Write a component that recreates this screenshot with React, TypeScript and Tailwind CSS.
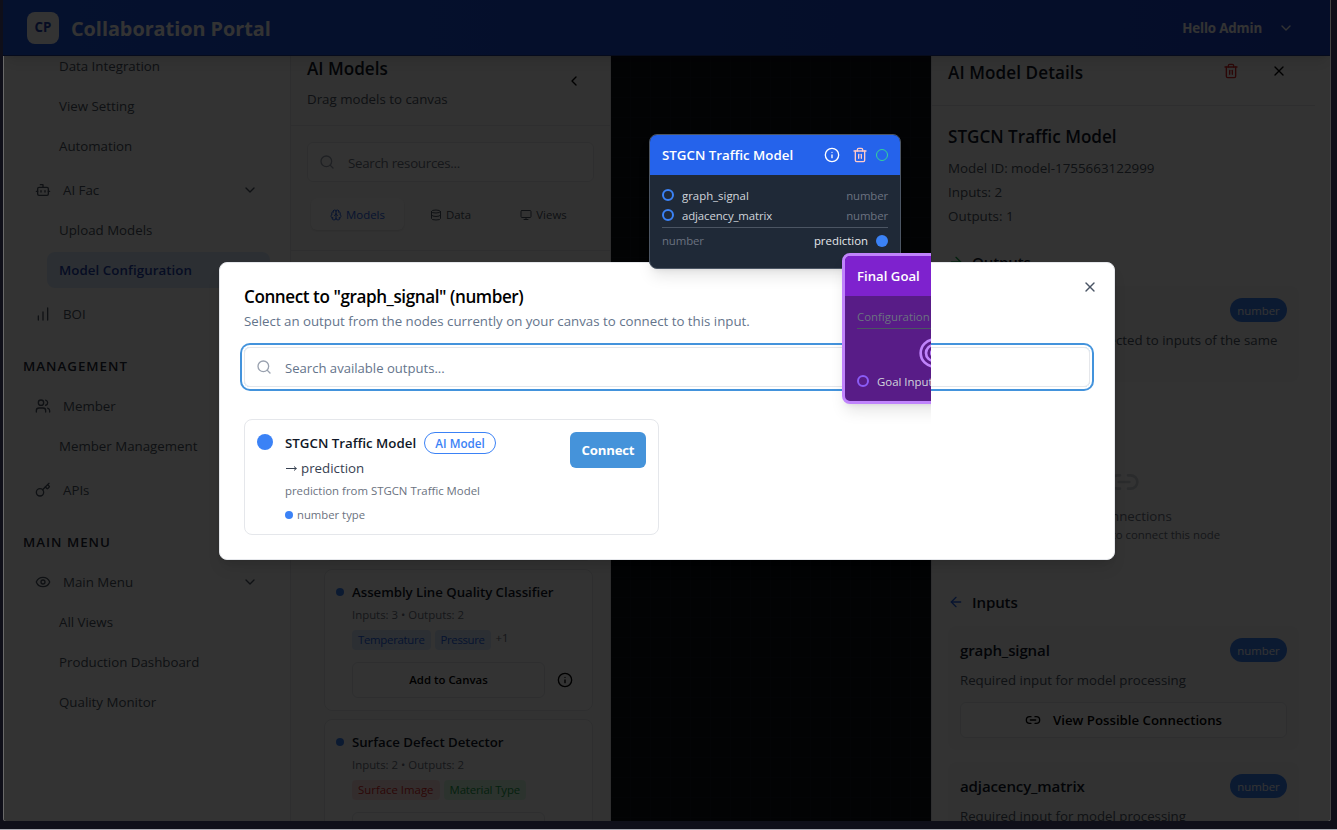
import type { ReactNode } from "react";
import {
  ArrowLeft,
  ArrowRight,
  BarChart,
  Bot,
  Brain,
  ChevronDown,
  ChevronLeft,
  Database,
  Eye,
  Info,
  Key,
  Link2,
  Monitor,
  Search,
  Target,
  Trash2,
  Users,
  X,
} from "lucide-react";

function Header() {
  return (
    <header className="relative z-10 flex h-14 shrink-0 items-center justify-between border-b border-[#1e3a8a] bg-gradient-to-r from-[#1c55e2] to-[#1d42c8] pr-[37px] pl-6 shadow-lg">
      <div className="flex items-center gap-3">
        <div className="flex size-8 items-center justify-center rounded-lg bg-white text-[13.3px] font-bold text-[#1e40af]">
          <span className="pt-px">CP</span>
        </div>
        <span className="pt-0.5 text-[19.8px] leading-7 font-bold text-white">Collaboration Portal</span>
      </div>
      <div className="flex items-center gap-4">
        <span className="pt-px text-[13.3px] leading-5 font-bold tracking-[-0.01em] text-white">Hello Admin</span>
        <ChevronDown className="size-4 text-white" />
      </div>
    </header>
  );
}

function SideParent({ icon, label, open }: { icon: ReactNode; label: string; open?: boolean }) {
  return (
    <div className="mt-2 flex h-9 shrink-0 items-center gap-3 px-3 text-[#4b5563]">
      {icon}
      <span className="flex-1">{label}</span>
      {open && <ChevronDown className="size-4" />}
    </div>
  );
}

function SideChild({ label, active }: { label: string; active?: boolean }) {
  return (
    <div
      className={
        active
          ? "mt-1 ml-6 flex h-9 shrink-0 items-center rounded-lg bg-[#dbeafe] px-3 font-semibold tracking-[0.005em] text-[#1e40af]"
          : "mt-1 ml-6 flex h-9 shrink-0 items-center px-3 text-[#4b5563]"
      }
    >
      {label}
    </div>
  );
}

function SideHeading({ label }: { label: string }) {
  return (
    <div className="mt-4 -mb-1 flex h-9 shrink-0 items-center font-semibold tracking-[0.075em] text-[#1f2937]">
      {label}
    </div>
  );
}

function Sidebar() {
  return (
    <aside className="flex w-[287px] shrink-0 flex-col overflow-hidden border-r border-gray-200 bg-white pr-5 pl-[19px] text-[13.3px] leading-5">
      <div className="-mt-3 flex flex-col">
        <SideChild label="Data Integration" />
        <SideChild label="View Setting" />
        <SideChild label="Automation" />
        <SideParent icon={<Bot className="size-4" />} label="AI Fac" open />
        <SideChild label="Upload Models" />
        <SideChild label="Model Configuration" active />
        <SideParent icon={<BarChart className="size-4" />} label="BOI" />
        <SideHeading label="MANAGEMENT" />
        <SideParent icon={<Users className="size-4" />} label="Member" />
        <SideChild label="Member Management" />
        <SideParent icon={<Key className="size-4" />} label="APIs" />
        <SideHeading label="MAIN MENU" />
        <SideParent icon={<Eye className="size-4" />} label="Main Menu" open />
        <SideChild label="All Views" />
        <SideChild label="Production Dashboard" />
        <SideChild label="Quality Monitor" />
      </div>
    </aside>
  );
}

function ModelCard({ name, meta, children }: { name: string; meta: string; children: ReactNode }) {
  return (
    <div className="flex h-[142px] shrink-0 gap-2 rounded-lg border border-gray-200 bg-white p-[11px]">
      <span className="mt-[7px] size-2 shrink-0 rounded-full bg-[#3b82f6]" />
      <div className="flex flex-1 flex-col">
        <div className="text-[13.25px] leading-[22px] font-semibold tracking-[-0.003em] text-gray-900">{name}</div>
        <div className="mt-1 text-[11.4px] leading-4 text-[#6b7280]">{meta}</div>
        <div className="mt-[7px] flex gap-1 text-[11.4px] leading-5">{children}</div>
        <div className="mt-3 flex items-center gap-1">
          <div className="flex h-9 flex-1 items-center justify-center rounded-md border border-gray-200 text-[11.4px] font-semibold text-black">
            Add to Canvas
          </div>
          <div className="flex w-8 justify-center text-black">
            <Info className="size-4" />
          </div>
        </div>
      </div>
    </div>
  );
}

function ModelsPanel() {
  return (
    <section className="flex w-80 shrink-0 flex-col overflow-hidden border-r border-gray-200 bg-[#fafafa]">
      <div className="flex h-[70px] shrink-0 items-start justify-between border-b border-gray-200 pr-7 pl-4">
        <div>
          <h2 className="-mt-px text-[17.1px] leading-7 font-semibold text-gray-900">AI Models</h2>
          <p className="mt-1.5 text-[13.3px] leading-5 text-[#4b5563]">Drag models to canvas</p>
        </div>
        <ChevronLeft className="mt-[17px] size-4 text-black" />
      </div>
      <div className="flex h-[125px] shrink-0 flex-col border-b border-gray-200 pt-4 pr-4 pl-4">
        <div className="flex h-10 items-center gap-3 rounded-md border border-gray-200 bg-white px-3">
          <Search className="-ml-px size-4 text-gray-400" />
          <span className="ml-px pt-0.5 text-[13.3px] leading-5 tracking-[-0.02em] text-[#6b7280]">Search resources...</span>
        </div>
        <div className="mt-3 grid grid-cols-3 p-1 text-[11.4px] text-[#4b5563]">
          <div className="flex h-8 items-center justify-center gap-1 rounded-md bg-white pt-px text-[#2563eb] shadow-sm">
            <Brain className="size-3" />
            Models
          </div>
          <div className="flex h-8 items-center justify-center gap-1 pt-px">
            <Database className="size-3" />
            Data
          </div>
          <div className="flex h-8 items-center justify-center gap-1 pt-px">
            <Monitor className="size-3" />
            Views
          </div>
        </div>
      </div>
      <div className="flex flex-1 flex-col justify-start gap-2 overflow-hidden pt-[18px] pr-[17px] pl-[33px]">
        <div className="flex h-[292px] shrink-0 flex-col gap-2">
          <div className="h-[142px] rounded-lg border border-gray-200 bg-white" />
          <div className="h-[142px] rounded-lg border border-gray-200 bg-white" />
        </div>
        <ModelCard name="Assembly Line Quality Classifier" meta="Inputs: 3 • Outputs: 2">
          <span className="rounded bg-[#dbeafe] px-1.5 tracking-[-0.025em] text-[#2563eb]">Temperature</span>
          <span className="rounded bg-[#dbeafe] px-1.5 tracking-[-0.03em] text-[#2563eb]">Pressure</span>
          <span className="-mt-px ml-px leading-[18px] text-[#6b7280]">+1</span>
        </ModelCard>
        <ModelCard name="Surface Defect Detector" meta="Inputs: 2 • Outputs: 2">
          <span className="rounded bg-[#fee2e2] px-1.5 text-[#dc2626]">Surface Image</span>
          <span className="rounded bg-[#dcfce7] px-1.5 tracking-[-0.01em] text-[#16a34a]">Material Type</span>
        </ModelCard>
      </div>
    </section>
  );
}

function TypeBadge() {
  return (
    <span className="flex h-6 w-[57px] items-center justify-center rounded-full bg-[#3b82f6] pt-px text-[11.4px] font-medium text-white">
      number
    </span>
  );
}

function InputCard({ name }: { name: string }) {
  return (
    <div className="mb-3 shrink-0 rounded-lg bg-gray-50 p-3">
      <div className="flex h-6 items-center justify-between">
        <span className="text-[15.1px] font-semibold tracking-[-0.01em] text-gray-900">{name}</span>
        <TypeBadge />
      </div>
      <p className="mt-2 text-[13.25px] leading-5 text-[#4b5563]">Required input for model processing</p>
      <div className="mt-3 flex h-9 items-center justify-center gap-3 rounded-md border border-gray-200 bg-white text-black">
        <Link2 className="size-4" />
        <span className="text-[13.25px] leading-5 font-semibold">View Possible Connections</span>
      </div>
    </div>
  );
}

function DetailsPanel() {
  return (
    <section className="flex flex-1 flex-col overflow-hidden border-l border-gray-200 bg-white pr-[15px]">
      <div className="flex h-[50px] shrink-0 items-start border-b border-gray-200 pt-0.5 pr-7 pl-4">
        <h2 className="flex-1 pt-px text-[17.1px] leading-7 font-semibold tracking-[0.005em] text-gray-900">
          AI Model Details
        </h2>
        <Trash2 className="mt-[5px] mr-8 size-4 text-[#dc2626]" />
        <X className="mt-[5px] size-4 text-black" />
      </div>
      <div className="flex flex-col pr-4 pl-4">
        <h3 className="mt-[17px] text-[17.1px] leading-7 font-semibold text-gray-900">STGCN Traffic Model</h3>
        <div className="mt-[7px] flex flex-col gap-1 text-[13.4px] leading-5 text-[#4b5563]">
          <p>Model ID: model-1755663122999</p>
          <p>Inputs: 2</p>
          <p>Outputs: 1</p>
        </div>
        <div className="mt-6 flex h-6 items-center gap-2">
          <ArrowRight className="size-4 text-[#16a34a]" />
          <span className="text-[15.1px] font-semibold tracking-[-0.01em] text-gray-900">Outputs</span>
        </div>
        <div className="mt-3 h-24 shrink-0 rounded-lg bg-gray-50 p-3">
          <div className="flex h-6 items-center justify-between">
            <span className="text-[15.1px] font-semibold text-gray-900">prediction</span>
            <TypeBadge />
          </div>
          <p className="mt-2 text-[13.25px] leading-5 text-[#4b5563]">
            This output can be connected to inputs of the same type
          </p>
        </div>
        <div className="mt-[84px] flex h-[124px] shrink-0 flex-col items-center text-[#6b7280]">
          <Link2 className="size-8 text-gray-300" />
          <p className="mt-2 text-[13.3px] leading-5">No connections</p>
          <p className="mt-px text-[11.4px] leading-4">Add new nodes to connect this node</p>
        </div>
        <div className="flex h-6 shrink-0 items-center gap-2">
          <ArrowLeft className="size-4 text-[#2563eb]" />
          <span className="text-[15.1px] font-semibold tracking-[-0.01em] text-gray-900">Inputs</span>
        </div>
        <div className="mt-3 flex flex-col">
          <InputCard name="graph_signal" />
          <InputCard name="adjacency_matrix" />
        </div>
      </div>
    </section>
  );
}

function ConnectDialog() {
  return (
    <div className="absolute top-[262px] left-[219px] z-30 flex h-[298px] w-[896px] flex-col rounded-lg border border-gray-200 bg-white px-6 shadow-lg">
      <div className="flex h-[62px] items-start justify-between">
        <h2 className="mt-[22px] text-[17.1px] leading-6 font-semibold tracking-[-0.025em] text-black">
          Connect to "graph_signal" (number)
        </h2>
        <X className="mt-4 -mr-2 size-4 text-gray-600" />
      </div>
      <p className="-mt-3.5 text-[13.28px] leading-5 text-[#64748b]">
        Select an output from the nodes currently on your canvas to connect to this input.
      </p>
      <div className="mt-4 flex h-10 w-[846px] shrink-0 items-center gap-3 rounded-md border border-gray-200 px-3 ring-2 ring-[#4393dc] ring-offset-2">
        <Search className="-ml-px size-4 text-gray-400" />
        <span className="ml-px pt-0.5 text-[13.1px] leading-5 text-[#64748b]">Search available outputs...</span>
      </div>
      <div className="mt-8 flex h-[116px] w-[415px] shrink-0 items-start rounded-lg border border-gray-200 p-3">
        <span className="mt-0.5 size-4 shrink-0 rounded-full bg-[#3b82f6]" />
        <div className="ml-3 flex flex-1 flex-col">
          <div className="flex h-[22px] items-center gap-2">
            <span className="pt-0.5 text-[13.3px] font-semibold text-gray-900">STGCN Traffic Model</span>
            <span className="flex h-[22px] w-[72px] items-center justify-center rounded-full border border-[#3b82f6] pt-px text-[11.7px] font-semibold text-[#3b82f6]">
              AI Model
            </span>
          </div>
          <div className="mt-[5px] flex h-5 items-center gap-1 text-[13.3px] text-[#374151]">
            <svg className="h-2 w-3" viewBox="0 0 12 8" fill="none" stroke="currentColor">
              <path d="M1 3.5H11.5M9 1.5 11.3 3.5 9 5.5" />
            </svg>
            prediction
          </div>
          <div className="mt-0.5 text-[11.4px] leading-5 text-[#6b7280]">prediction from STGCN Traffic Model</div>
          <div className="mt-1.5 flex h-4 items-center gap-1 text-[11.3px] text-[#6b7280]">
            <span className="size-2 rounded-full bg-[#3b82f6]" />
            number type
          </div>
        </div>
        <div className="flex h-9 w-[76px] items-center justify-center rounded-md bg-[#4593da] pt-0.5 text-[13.2px] font-bold tracking-[-0.015em] text-white">
          Connect
        </div>
      </div>
    </div>
  );
}

function CanvasNodes() {
  return (
    <div className="pointer-events-none absolute top-14 left-[611px] z-40 h-[765px] w-80 overflow-hidden">
      <div className="absolute top-[78px] left-[38px] h-[135px] w-[252px] rounded-lg border border-[#4b5563] bg-[#1f2937] text-[11.4px] text-[#d1d5db] shadow-[0_10px_15px_-3px_rgba(0,0,0,0.1),0_4px_6px_-4px_rgba(0,0,0,0.1)]">
        <div className="flex h-10 items-center rounded-t-[7px] bg-[#2563eb] px-3">
          <span className="flex-1 pt-0.5 text-[13.3px] font-semibold text-white">STGCN Traffic Model</span>
          <Info className="size-4 text-white" />
          <Trash2 className="ml-3 size-4 text-[#fecaca]" />
          <span className="ml-2 size-3 rounded-full border-[1.5px] border-[#34d399]" />
        </div>
        <div className="flex flex-col px-3 pt-2.5">
          <div className="flex h-5 items-center gap-2">
            <span className="size-3 rounded-full border-2 border-[#3b82f6]" />
            <span className="flex-1 pt-0.5">graph_signal</span>
            <span className="pt-0.5 tracking-[-0.01em] text-[#6b7280]">number</span>
          </div>
          <div className="flex h-5 items-center gap-2">
            <span className="size-3 rounded-full border-2 border-[#3b82f6]" />
            <span className="flex-1 pt-0.5 tracking-[-0.01em]">adjacency_matrix</span>
            <span className="pt-0.5 tracking-[-0.01em] text-[#6b7280]">number</span>
          </div>
          <div className="mt-0.5 flex h-[26px] items-center gap-2 border-t border-[#4b5563]">
            <span className="flex-1 tracking-[-0.01em] text-[#6b7280]">number</span>
            <span className="text-[#e5e7eb]">prediction</span>
            <span className="size-3 rounded-full bg-[#3b82f6]" />
          </div>
        </div>
      </div>
      <div className="absolute top-[197px] left-[231px] h-[151px] w-[184px] rounded-lg border-3 border-[#c084fc] bg-[#581c87] text-[11.4px] text-[#d1d5db] shadow-[0_10px_15px_-3px_rgba(0,0,0,0.1),0_4px_6px_-4px_rgba(0,0,0,0.1)]">
        <div className="flex h-10 items-center rounded-t-[5px] bg-[#7e22ce] px-3">
          <span className="pt-0.5 text-[13.2px] font-semibold whitespace-nowrap text-white">Final Goal</span>
        </div>
        <div className="flex flex-col px-3 pt-2.5">
          <div className="h-[23px] border-b border-[#4b5563] pt-px leading-5 text-[#6b7280]">Configuration</div>
          <Target className="mt-2 size-8 self-center text-[#c084fc]" />
          <div className="mt-0.5 flex h-5 items-center gap-2">
            <span className="size-3 rounded-full border-2 border-[#8b5cf6]" />
            <span className="pt-0.5 whitespace-nowrap">Goal Input</span>
          </div>
        </div>
      </div>
    </div>
  );
}

export default function App() {
  return (
    <div className="relative flex h-[830px] w-[1337px] flex-col overflow-hidden border-b border-[#a9aab2] bg-[#0f0f19] pr-1.5 pl-[3px] font-['Open_Sans','Noto_Sans',sans-serif]">
      <div className="relative flex h-[821px] flex-col overflow-hidden rounded-b-[3px]">
        <Header />
        <div className="flex min-h-0 flex-1 border-r border-l border-r-gray-200 border-l-gray-200">
          <Sidebar />
          <ModelsPanel />
          <div className="w-80 shrink-0 bg-[#0c1018] bg-[linear-gradient(to_right,#11161f_1px,transparent_1px),linear-gradient(to_bottom,#11161f_1px,transparent_1px)] bg-[size:20px_20px] bg-[position:19px_1px]" />
          <DetailsPanel />
        </div>
        <div className="absolute inset-0 z-20 bg-black/80" />
        <div className="absolute top-14 bottom-0 left-0 z-20 w-px bg-[#696969]" />
        <div className="absolute top-0 right-0 bottom-0 z-20 w-px bg-[#444]" />
      </div>
      <ConnectDialog />
      <CanvasNodes />
    </div>
  );
}
